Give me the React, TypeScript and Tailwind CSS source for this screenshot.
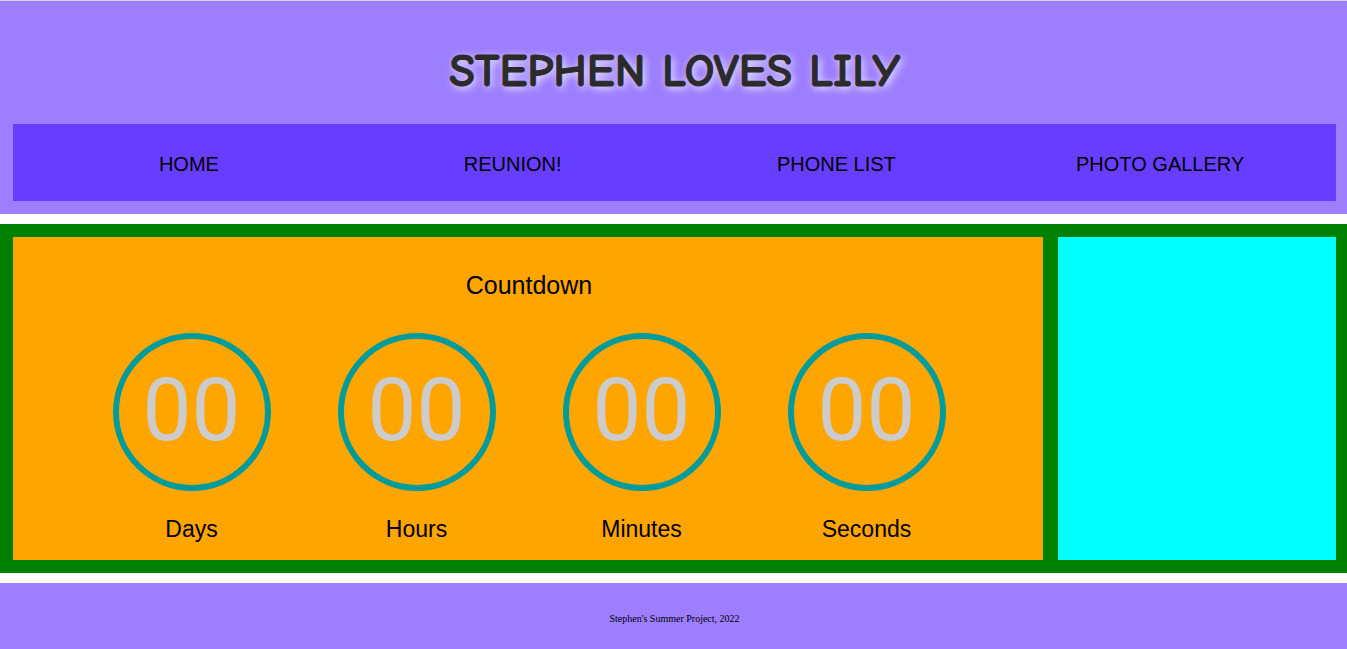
const links = ["HOME", "REUNION!", "PHONE LIST", "PHOTO GALLERY"];
const units = ["Days", "Hours", "Minutes", "Seconds"];

export default function App() {
  return (
    <div className="flex min-h-screen flex-col gap-2.5 bg-white font-['Liberation_Sans',Arial,sans-serif] text-black">
      <header className="border-t border-[#d4d4dc] bg-[#9c7eff] pr-[11px] pb-[13px] pl-[13px]">
        <h1 className="flex h-[123px] items-center justify-center pt-[18px] font-['Comic_Sans_MS','Comic_Neue',cursive] text-[47px] font-bold text-[#2b2b2b] [-webkit-text-stroke:1px_#2b2b2b] [text-shadow:2px_2px_8px_white]">
          STEPHEN LOVES LILY
        </h1>
        <nav className="grid h-[77px] grid-cols-4 items-center bg-[#673dff] px-[14px] pt-0.5 text-center text-xl">
          {links.map((l) => (
            <a key={l} href="#">{l}</a>
          ))}
        </nav>
      </header>
      <main className="flex gap-[15px] bg-[#008000] py-[13px] pr-[11px] pl-[13px]">
        <section className="flex-1 bg-[#ffa500] pt-8 pr-16 pb-[13px] pl-[66px] text-center">
          <h2 className="text-[25px] leading-8">Countdown</h2>
          <div className="mt-8 grid grid-cols-4">
            {units.map((u) => (
              <div key={u} className="flex flex-col items-center gap-5">
                <div className="flex size-[158px] items-center justify-center rounded-full border-[6px] border-[#009c9c] pb-1 font-[Roboto,sans-serif] text-[87px] leading-none text-[#ccc]">
                  00
                </div>
                <div className="text-[23px] leading-9">{u}</div>
              </div>
            ))}
          </div>
        </section>
        <aside className="w-[278px] bg-[#00ffff]" />
      </main>
      <footer className="flex grow items-center justify-center bg-[#9c7eff] pt-1 pl-0.5 font-['Liberation_Serif','Times_New_Roman',serif] text-[10px]">
        Stephen's Summer Project, 2022
      </footer>
    </div>
  );
}
